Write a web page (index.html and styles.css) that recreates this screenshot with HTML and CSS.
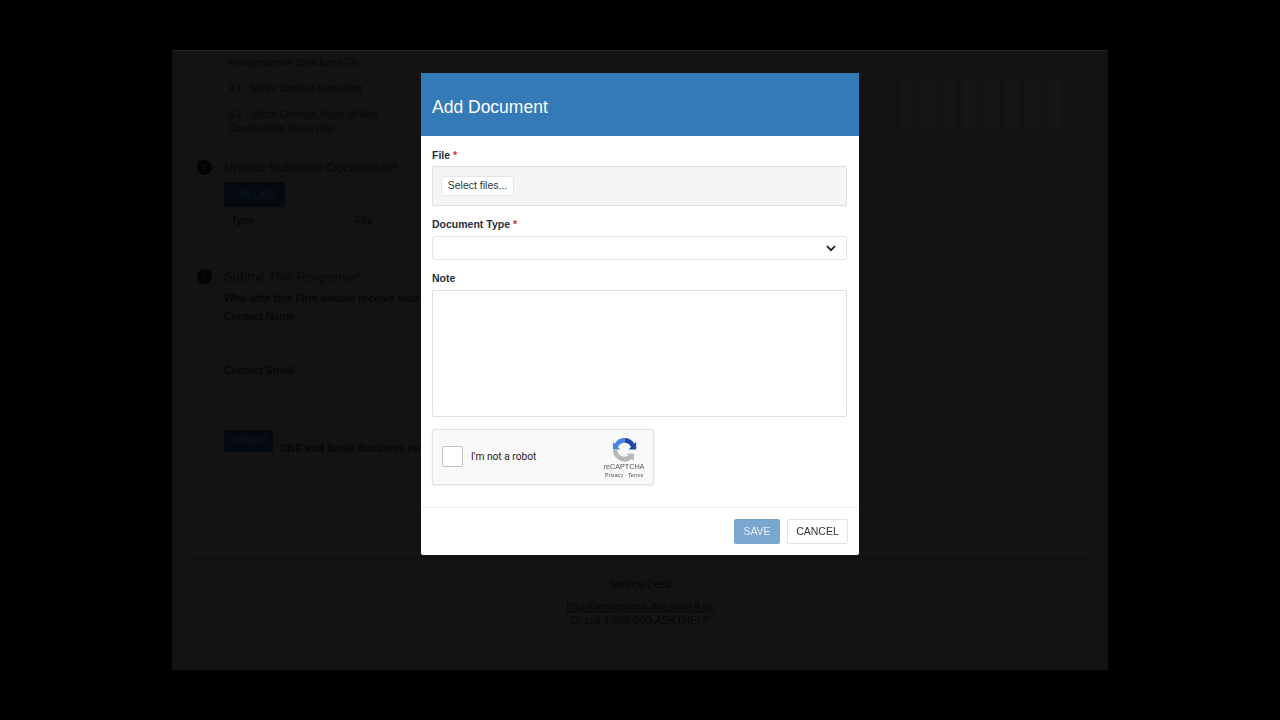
FILE: index.html
```html
<!DOCTYPE html>
<html lang="en">
<head>
<meta charset="utf-8">
<title>Add Document</title>
<link rel="stylesheet" href="styles.css">
</head>
<body>
<main class="page">
  <div class="topline"></div>
  <div class="content">
    <div class="clip">
      <div class="faint-grid"></div>
      <p class="item second">Independence Structures CB</p>
      <p class="item">9.1 - Minor Conduit Surveying</p>
      <p class="item">9.2 - Minor Change, Right of Way<br>Construction Surveying</p>
    </div>
    <h2 class="step upload-step"><span class="num">4</span>Upload Submittal Documents*</h2>
    <div class="btn-dark upload">UPLOAD</div>
    <div class="thead"><span class="th-type">Type</span><span>File</span></div>
    <h2 class="step submit-step"><span class="num">5</span>Submit This Response*</h2>
    <p class="strong who">Who with this Firm should receive auto confirmation emails?</p>
    <p class="strong contact">Contact Name</p>
    <p class="strong email">Contact Email</p>
    <div class="submit-row">
      <div class="btn-dark submit">SUBMIT</div>
      <span class="strong dbe">DBE and Small Business radio</span>
    </div>
  </div>
  <footer class="foot">
    <p>Service Desk</p>
    <p class="foot-link">http://servicedesk.dot.state.fl.us</p>
    <p>Or call 1-866-000-ASKTHELP</p>
  </footer>

  <section class="modal">
    <header class="modal-head">Add Document</header>
    <div class="modal-body">
      <label class="lbl">File <em>*</em></label>
      <div class="dropzone"><span class="select-btn">Select files...</span></div>
      <label class="lbl lbl-type">Document Type <em>*</em></label>
      <div class="combo">
        <svg class="chev" width="10" height="7" viewBox="0 0 10 7"><path d="M1 1.2 5 5.2 9 1.2" fill="none" stroke="#1c1c1c" stroke-width="1.7"/></svg>
      </div>
      <label class="lbl lbl-note">Note</label>
      <div class="note"></div>
      <div class="captcha">
        <span class="check"></span>
        <span class="robot">I'm not a robot</span>
        <div class="brand">
          <svg width="25" height="25" viewBox="0 0 25 25">
            <path d="M12.5 1A11.5 11.5 0 0 0 2.6 6.7L0.8 5 1 12.4H8.2L6 10.2A7.3 7.3 0 0 1 12.5 5.8Z" fill="#4a86e0"/>
            <path d="M12.5 1A11.5 11.5 0 0 1 22.4 6.7L24.2 4.8V12.4H16.6L19 10A7.3 7.3 0 0 0 12.5 5.8Z" fill="#1f4aa8"/>
            <path d="M1 12.4H5.3A7.3 7.3 0 0 0 16.4 18.6L14.6 16.7 22 16.6V24L20 22A11.7 11.7 0 0 1 1 12.4Z" fill="#b8b8b8"/>
          </svg>
          <span class="brand-name">reCAPTCHA</span>
          <span class="brand-links">Privacy · Terms</span>
        </div>
      </div>
    </div>
    <div class="modal-foot">
      <span class="action save">SAVE</span>
      <span class="action cancel">CANCEL</span>
    </div>
  </section>
</main>
</body>
</html>
```
FILE: styles.css
```css
* { box-sizing: border-box; }
html, body { margin: 0; height: 100%; background: #000; overflow: hidden; }
body { font-family: "Liberation Sans", Arial, sans-serif; }
p, h2 { margin: 0; font-weight: normal; }

.page {
  position: relative;
  width: 936px;
  height: 620px;
  margin: 50px 0 0 172px;
  background: #131313;
  color: #080808;
}
.topline { height: 1px; background: #232323; }

.content { height: 502px; padding: 0 38px 0 52px; font-size: 10.5px; filter: blur(0.5px); }
.clip { padding-left: 4px; height: 83px; overflow: hidden; }
.faint-grid {
  float: right;
  width: 170px;
  height: 52px;
  margin-top: 28px;
  background: repeating-linear-gradient(90deg, #151515 0 14px, #131313 14px 21px);
}
.item { line-height: 14px; font-size: 10.2px; color: #080808; }
.second { margin-top: 5px; }
.item + .item { margin-top: 12px; }

.step { position: relative; font-size: 13px; line-height: 18px; color: #080808; }
.submit-step { font-size: 13.1px; }
.num {
  position: absolute;
  left: -27px;
  top: 1px;
  width: 15px;
  height: 15px;
  border-radius: 50%;
  background: #030303;
  color: #131313;
  font-size: 9px;
  line-height: 15px;
  text-align: center;
}
.upload-step { margin-top: 25px; }
.btn-dark {
  background: #050a11;
  color: #0b1522;
  font-size: 10px;
  text-align: center;
}
.upload { width: 61px; height: 25px; line-height: 25px; margin-top: 5px; }
.thead { display: flex; margin-top: 7px; font-weight: bold; font-size: 10px; line-height: 14px; color: #080808; }
.th-type { width: 131px; padding-left: 7px; }
.submit-step { margin-top: 40px; }
.strong { font-weight: bold; font-size: 10.5px; line-height: 14px; color: #070707; white-space: nowrap; }
.who { margin-top: 5px; }
.contact { margin-top: 4px; }
.email { margin-top: 40px; }
.submit-row { display: flex; align-items: flex-end; margin-top: 53px; }
.submit { width: 49px; height: 22px; line-height: 22px; }
.dbe { margin: 0 0 -3px 7px; }

.foot {
  margin: 0 18px;
  padding-top: 23px;
  border-top: 1px solid #1b1b1b;
  text-align: center;
  font-size: 10.5px;
  line-height: 14px;
  color: #060606;
  filter: blur(0.5px);
}
.foot-link { margin-top: 8px; text-decoration: underline; }

.modal {
  position: absolute;
  left: 249px;
  top: 23px;
  width: 438px;
  height: 482px;
  background: #fff;
  border-radius: 2px;
  display: flex;
  flex-direction: column;
  filter: blur(0.25px);
}
.modal-head {
  height: 63px;
  padding: 0 11px;
  background: #337ab7;
  color: #fff;
  font-size: 17.5px;
  line-height: 68px;
  flex: none;
}
.modal-body { flex: 1; padding: 12px 11px 0; border-bottom: 1px solid #f2f2f2; }
.lbl { display: block; font-size: 10.5px; font-weight: bold; line-height: 14px; color: #25303c; }
.lbl em { color: #d9312b; font-style: normal; }
.dropzone {
  width: 415px;
  height: 40px;
  margin-top: 4px;
  padding: 9px 8px;
  background: #f5f5f5;
  border: 1px solid #e0e0e0;
  border-radius: 2px;
}
.select-btn {
  display: block;
  width: 73px;
  height: 20px;
  background: #fff;
  border: 1px solid #e6e6e6;
  border-radius: 3px;
  font-size: 10.5px;
  line-height: 16px;
  text-align: center;
  color: #333;
}
.lbl-type { margin-top: 11px; }
.combo {
  display: flex;
  align-items: center;
  justify-content: flex-end;
  width: 415px;
  height: 24px;
  margin-top: 5px;
  padding-right: 10px;
  border: 1px solid #e3e3e3;
  border-radius: 3px;
}
.lbl-note { margin-top: 11px; }
.note {
  width: 415px;
  height: 127px;
  margin-top: 5px;
  border: 1px solid #dfdfdf;
  border-radius: 2px;
}
.captcha {
  display: flex;
  align-items: center;
  width: 222px;
  height: 56px;
  margin-top: 12px;
  padding: 0 9px 2px;
  background: #f9f9f9;
  border: 1px solid #e2e2e2;
  border-radius: 2px;
  box-shadow: 0 1px 2px rgba(0,0,0,.08);
}
.check {
  flex: none;
  width: 21px;
  height: 21px;
  background: #fff;
  border: 1.5px solid #c1c1c1;
  border-radius: 2px;
}
.robot { margin-left: 8px; font-family: Roboto, "Liberation Sans", sans-serif; font-size: 10.2px; color: #222; }
.brand { align-self: flex-start; margin-left: auto; margin-right: -1px; display: flex; flex-direction: column; align-items: center; width: 42px; padding-top: 7px; }
.brand-name { font-size: 7.2px; line-height: 9px; color: #555; }
.brand-links { font-size: 5.6px; line-height: 9px; color: #555; white-space: nowrap; }

.modal-foot { display: flex; justify-content: flex-end; gap: 7px; padding: 11px 11px 11px; flex: none; height: 47px; }
.action {
  height: 25px;
  border-radius: 2px;
  font-size: 10.5px;
  line-height: 25px;
  text-align: center;
}
.save { width: 46px; background: #7aa7d0; color: #e6eff7; }
.cancel { width: 61px; line-height: 23px; border: 1px solid #e3e3e3; color: #333; }
```
